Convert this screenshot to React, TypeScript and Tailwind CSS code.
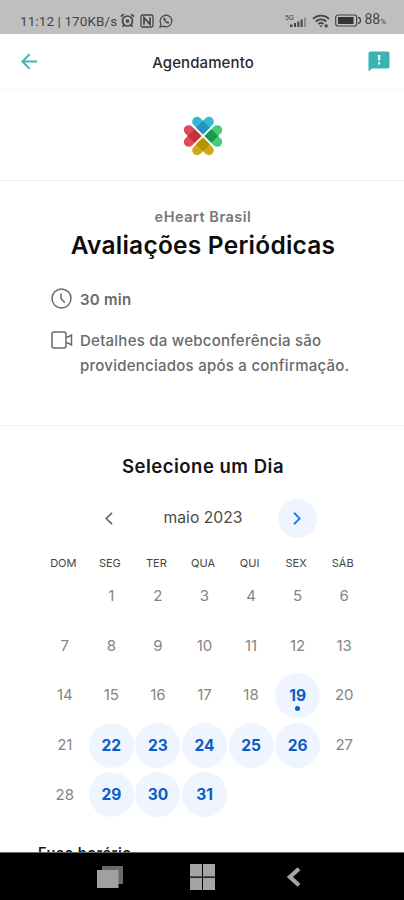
import React from 'react'

const weekdays = ['DOM', 'SEG', 'TER', 'QUA', 'QUI', 'SEX', 'SÁB']
const today = 19
const available = [19, 22, 23, 24, 25, 26, 29, 30, 31]

const App = () => {
  return (
    <div className="flex h-[900px] w-[404px] flex-col overflow-hidden bg-white font-['Inter',sans-serif]">
      <StatusBar />
      <Header />
      <div className="flex min-h-0 flex-1 flex-col overflow-hidden">
        <div className="flex h-[91px] shrink-0 items-center justify-center border-b border-[#ededed] pt-[2px] pl-[2px]">
          <Logo />
        </div>
        <EventDetails />
        <Calendar />
        <h3 className="mt-[26px] ml-[38px] shrink-0 text-[14.5px] leading-5 font-semibold tracking-[0.5px] text-[#1a1a1a]">Fuso horário</h3>
      </div>
      <NavigationBar />
    </div>
  )
}

const StatusBar = () => (
  <div className="flex h-[34px] shrink-0 items-center justify-between bg-[#bfbfbf] pt-[7px] pr-[18px] pl-5 font-['Roboto',sans-serif] text-[#454545]">
    <div className="flex items-center">
      <span className="w-[98px] text-[13.5px] leading-4 tracking-[0.1px] whitespace-nowrap">11:12 | 170KB/s</span>
      <svg className="ml-[2px] h-[15px] w-[15px]" viewBox="0 0 15 15" fill="none" stroke="currentColor" strokeWidth="1.7">
        <circle cx="7.5" cy="8" r="5" />
        <path d="M1 3.6 3.8 1.2M14 3.6 11.2 1.2M3.8 12 2.5 13.7M11.2 12l1.3 1.7" />
        <circle cx="7.5" cy="8" r="1" fill="currentColor" />
      </svg>
      <svg className="ml-[5px] h-[14px] w-[14px]" viewBox="0 0 14 14" fill="none" stroke="currentColor" strokeWidth="1.3">
        <rect x="1" y="1" width="12" height="12" rx="1.5" />
        <path d="M4 10.8V3.6l6 6.6V3.2" strokeWidth="1.7" />
      </svg>
      <svg className="ml-[5px] h-[14px] w-[14px]" viewBox="0 0 14 14" fill="none" stroke="currentColor" strokeWidth="1.2">
        <path d="M1 13l.9-3.2A5.8 5.8 0 1 1 4.2 12.1z" />
        <path d="M4.7 4.2c-.8 1.8 2.5 5.6 4.8 5.1l.5-1.1-1.3-.8-.8.7c-.9-.4-1.5-1.1-1.9-2l.6-.7-.6-1.3z" fill="currentColor" strokeWidth=".4" />
      </svg>
    </div>
    <div className="flex items-center">
      <svg className="h-[14px] w-[24px]" viewBox="0 0 24 14" fill="currentColor">
        <text x="0" y="5.5" fontSize="7">5G</text>
        <path d="M5 10.5h2.5V13H5zM9 9h2v4H9zM12.3 7.5h2V13h-2zM15.6 5.5h2V13h-2z" />
        <path d="M19 3.5h1.8V13H19z" opacity=".45" />
      </svg>
      <svg className="ml-[3px] h-[14px] w-[18px]" viewBox="0 0 18 14" fill="none" stroke="currentColor" strokeWidth="1.8">
        <path d="M1 4.8c4.5-4.3 11.5-4.3 16 0M3.8 7.5c3-2.8 7.4-2.8 10.4 0M6.5 10c1.5-1.4 3.5-1.4 5 0" />
        <path d="M7.3 11.5h3.4L9 13.4zM12.7 10.5h3v2.8h-3z" fill="currentColor" stroke="none" />
      </svg>
      <svg className="ml-[5px] h-[13px] w-[26px]" viewBox="0 0 26 13">
        <rect x=".7" y="1" width="21" height="11" rx="2.2" fill="none" stroke="currentColor" strokeWidth="1.2" />
        <rect x="3" y="3" width="15.5" height="7" fill="#333" />
        <path d="M23 3.5q2.5 0 2.5 3t-2.5 3" fill="none" stroke="currentColor" strokeWidth="1.4" />
      </svg>
      <span className="ml-[3px] text-[14px] leading-4">88<span className="text-[8px]">%</span></span>
    </div>
  </div>
)

const Header = () => (
  <header className="flex h-[56px] shrink-0 items-center justify-between border-b border-[#f6f6f6] pr-[14px] pl-[21px]">
    <svg className="h-[17px] w-[17px]" viewBox="0 0 18 18" fill="none" stroke="#45b5b7" strokeWidth="2.2">
      <path d="M17 9H2M9.2 1.2 1.6 9l7.6 7.8" />
    </svg>
    <h1 className="pt-[2px] text-[15px] leading-5 font-medium tracking-[0.1px] text-[#2a2a2a]">Agendamento</h1>
    <svg className="h-[21px] w-[22px]" viewBox="0 0 22 21">
      <path d="M2.5.5h17.500q1.500 0 1.500 1.500v14q0 1.500-1.500 1.500H4L.5 20.500V2.500q0-2 2-2z" fill="#3bb3b5" />
      <path d="M10 4h2.200v5.500H10zM10 11.300h2.200v2.200H10z" fill="#fff" />
    </svg>
  </header>
)

// Four hearts whose tips meet in the middle
const Logo = () => (
  <svg className="h-[40px] w-[40px]" viewBox="0 0 40 40">
    <HeartPetal rotate="rotate(0 20 20)" color="#35b7d6" shade="#2494bd" />
    <HeartPetal rotate="rotate(90 20 20)" color="#45cb78" shade="#14994d" />
    <HeartPetal rotate="rotate(180 20 20)" color="#cda91c" shade="#b59200" />
    <HeartPetal rotate="rotate(270 20 20)" color="#df4c58" shade="#c3333e" />
  </svg>
)

const HeartPetal = ({ rotate, color, shade }: { rotate: string; color: string; shade: string }) => (
  <g transform={rotate}>
    <g transform="translate(20 18.5) rotate(225)">
      <path d="M0 0H13.300a4.800 4.800 0 0 1 0 9.700H9.700V13.300a4.800 4.800 0 0 1-9.700 0z" fill={color} />
      <path d="M0 0h9.700v9.700H0z" fill={shade} />
    </g>
  </g>
)

const EventDetails = () => (
  <section className="flex h-[245px] shrink-0 flex-col border-b border-[#f2f2f2] pt-[25px]">
    <p className="pl-[2px] text-center text-[14.5px] leading-[21px] font-semibold tracking-[0.5px] text-[#777]">eHeart Brasil</p>
    <h2 className="pt-px pl-[2px] text-center text-[24.5px] leading-[35px] font-semibold tracking-[0.23px] whitespace-nowrap text-[#0d0d0d]">Avaliações Periódicas</h2>
    <div className="mt-[24px] ml-[51px] flex items-start gap-[8px] text-[#6a6a6a]">
      <svg className="mt-px h-[21px] w-[21px]" viewBox="0 0 21 21" fill="none" stroke="currentColor" strokeWidth="1.5">
        <circle cx="10.5" cy="10.5" r="9.5" />
        <path d="M10 5.5v5l3.800 4.300" />
      </svg>
      <p className="text-[15px] leading-[25px] font-semibold tracking-[0.25px]">30 min</p>
    </div>
    <div className="mt-4 ml-[51px] flex items-start gap-[7px] text-[#6a6a6a]">
      <svg className="mt-[3px] h-[18px] w-[22px] shrink-0" viewBox="0 0 22 18" fill="none" stroke="currentColor" strokeWidth="1.5">
        <rect x="1" y="1" width="14" height="16" rx="2" />
        <path d="M15 6h2l3.500-2v10L17 12h-2" />
      </svg>
      <p className="text-[15px] leading-[25px] font-medium tracking-[0.25px] whitespace-nowrap">
        Detalhes da webconferência são
        <br />
        providenciados após a confirmação.
      </p>
    </div>
  </section>
)

const Calendar = () => (
  <section className="flex shrink-0 flex-col pt-[28px]">
    <h3 className="pl-[2px] text-center text-[18.5px] leading-6 font-semibold tracking-[0.5px] text-[#141414]">Selecione um Dia</h3>
    <div className="mt-[20px] flex h-[40px] items-center justify-center pl-[2px]">
      <button className="flex h-[39px] w-[39px] items-center justify-center">
        <svg className="h-[13px] w-[8px]" viewBox="0 0 8 13" fill="none" stroke="#666" strokeWidth="1.7">
          <path d="M7 .8 1.3 6.5 7 12.2" />
        </svg>
      </button>
      <span className="w-[149px] text-center text-[15.7px] leading-6 text-[#4a4a4a]">maio 2023</span>
      <button className="flex h-[39px] w-[39px] items-center justify-center rounded-full bg-[#eff5fe]">
        <svg className="h-[13px] w-[8px]" viewBox="0 0 8 13" fill="none" stroke="#2f7de0" strokeWidth="2">
          <path d="M1 .8 6.7 6.5 1 12.2" />
        </svg>
      </button>
    </div>
    <div className="mt-[14px] ml-[40px] grid w-[326px] grid-cols-7 text-center text-[11px] leading-[22px] text-[#444]">
      {weekdays.map((day) => (
        <span key={day}>{day}</span>
      ))}
    </div>
    <div className="ml-[41.5px] grid w-[326px] grid-cols-7 gap-y-[4.6px]">
      <span />
      {Array.from({ length: 31 }, (_, i) => i + 1).map((day) => (
        <Day key={day} day={day} />
      ))}
    </div>
  </section>
)

const Day = ({ day }: { day: number }) => {
  const isOpen = available.includes(day)
  return (
    <div className="flex justify-center">
      <div
        className={
          isOpen
            ? 'relative flex h-[45px] w-[45px] items-center justify-center rounded-full bg-[#eff5fe] text-[15.5px] font-bold text-[#0c5bc6]'
            : 'flex h-[45px] w-[45px] items-center justify-center text-[15px] text-[#858585]'
        }
      >
        {day}
        {day === today && <span className="absolute bottom-[7px] h-[5px] w-[5px] rounded-full bg-[#0c5bc6]" />}
      </div>
    </div>
  )
}

const NavigationBar = () => (
  <nav className="flex h-[48px] shrink-0 items-center border-t border-[#666] bg-black pl-[97px] text-[#a2a4a5]">
    <svg className="h-[24px] w-[27px]" viewBox="0 0 27 24">
      <path d="M5 1h21v18H5z" fill="#696969" />
      <path d="M0 5h21.5v18H0z" fill="#a0a0a0" />
    </svg>
    <svg className="ml-[66px] h-[26px] w-[25px]" viewBox="0 0 25 26" fill="currentColor">
      <path d="M0 0h12v12.500H0zM13 0h12v12.500H13zM0 13.700h12V26H0zM13 13.700h12V26H13z" />
    </svg>
    <svg className="ml-[72px] h-[20px] w-[14px]" viewBox="0 0 15 22" fill="none" stroke="currentColor" strokeWidth="4.5">
      <path d="M13 2 3 11l10 9" />
    </svg>
  </nav>
)

export default App
